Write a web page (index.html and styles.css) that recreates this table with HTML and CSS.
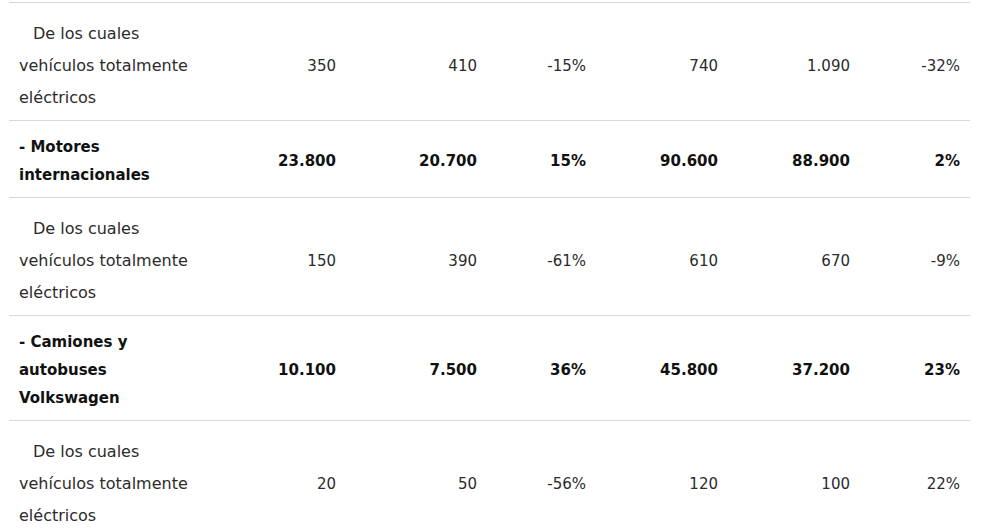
FILE: index.html
```html
<!DOCTYPE html>
<html lang="es">
<head>
<meta charset="utf-8">
<link rel="stylesheet" href="styles.css">
</head>
<body>
<table class="data">
  <colgroup>
    <col class="c1"><col class="c2"><col class="c3"><col class="c4"><col class="c5"><col class="c6"><col class="c7">
  </colgroup>
  <tbody>
    <tr class="sub">
      <td class="label"><span class="indent">De los cuales</span> vehículos totalmente eléctricos</td>
      <td>350</td><td>410</td><td>-15%</td><td>740</td><td>1.090</td><td>-32%</td>
    </tr>
    <tr class="main">
      <td class="label">- Motores internacionales</td>
      <td>23.800</td><td>20.700</td><td>15%</td><td>90.600</td><td>88.900</td><td>2%</td>
    </tr>
    <tr class="sub">
      <td class="label"><span class="indent">De los cuales</span> vehículos totalmente eléctricos</td>
      <td>150</td><td>390</td><td>-61%</td><td>610</td><td>670</td><td>-9%</td>
    </tr>
    <tr class="main">
      <td class="label">- Camiones y autobuses Volkswagen</td>
      <td>10.100</td><td>7.500</td><td>36%</td><td>45.800</td><td>37.200</td><td>23%</td>
    </tr>
    <tr class="sub">
      <td class="label"><span class="indent">De los cuales</span> vehículos totalmente eléctricos</td>
      <td>20</td><td>50</td><td>-56%</td><td>120</td><td>100</td><td>22%</td>
    </tr>
  </tbody>
</table>
</body>
</html>
```
FILE: styles.css
```css
html, body {
  margin: 0;
  padding: 0;
  background: #fff;
}
body {
  padding: 2px 0 0 9px;
  font-family: "DejaVu Sans", sans-serif;
  color: #2b2b2b;
}
.data {
  border-collapse: collapse;
  width: 961px;
  table-layout: fixed;
  border-top: 1px solid #d9d9d9;
}
.c1 { width: 196px; }
.c2 { width: 141px; }
.c3 { width: 141px; }
.c4 { width: 109px; }
.c5 { width: 132px; }
.c6 { width: 132px; }
.c7 { width: 110px; }
.data td {
  border-bottom: 1px solid #d9d9d9;
  text-align: right;
  vertical-align: middle;
  font-size: 15px;
}
.data td.label {
  text-align: left;
}
.sub td {
  padding: 15px 10px 6px;
  line-height: 32px;
  font-weight: 400;
}
.sub td.label {
  font-size: 16px;
}
.main td {
  padding: 12px 10px 8px;
  line-height: 28px;
  font-weight: 700;
  color: #111;
}
.indent {
  padding-left: 14px;
}
```
